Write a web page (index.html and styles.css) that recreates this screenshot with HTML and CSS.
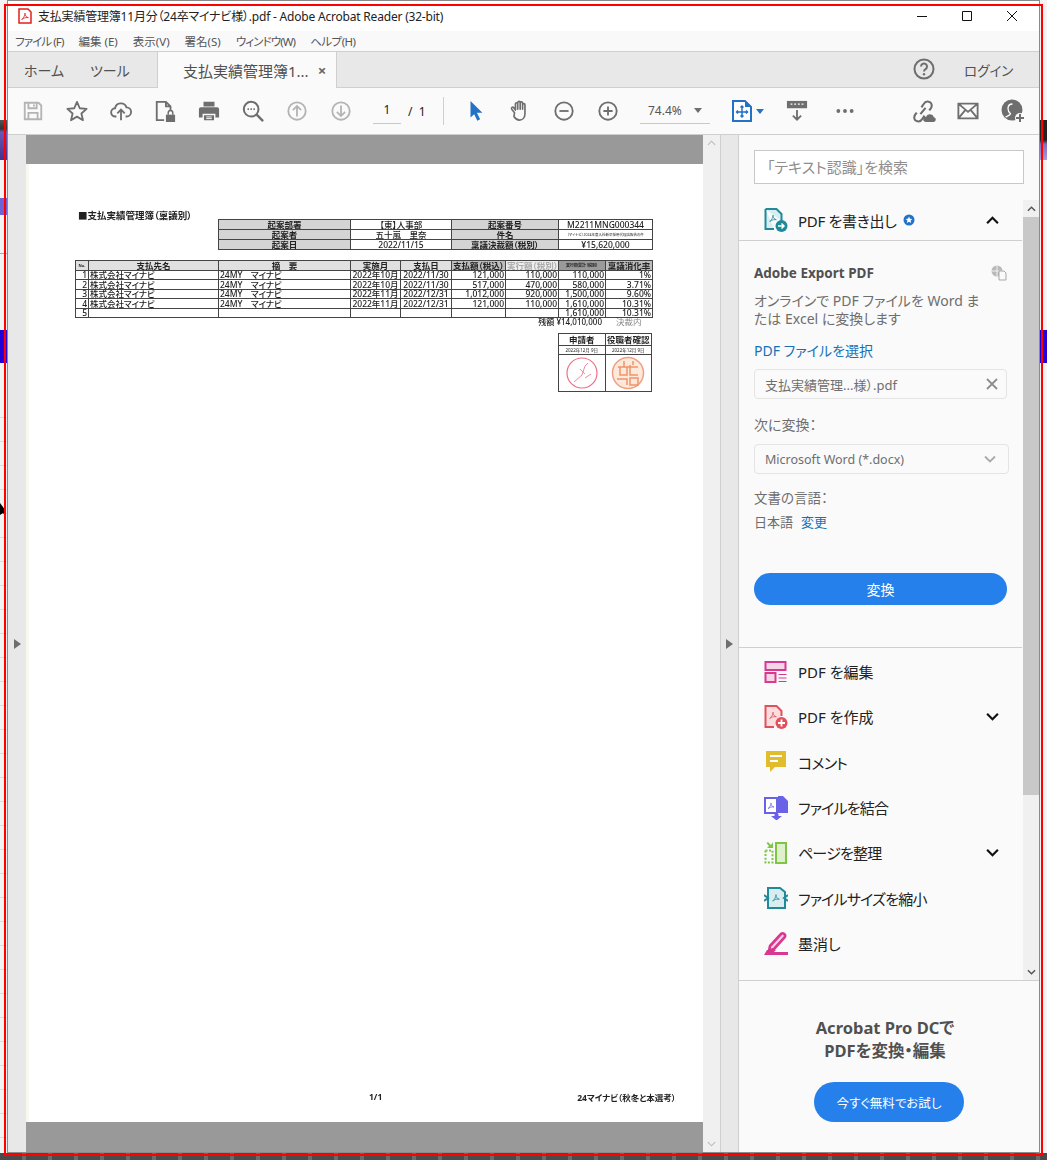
FILE: index.html
```html
<!DOCTYPE html>
<html lang="ja">
<head>
    <meta charset="UTF-8">
    <title>支払実績管理簿11月分（24卒マイナビ様）.pdf - Adobe Acrobat Reader (32-bit)</title>
    <link rel="stylesheet" href="styles.css">
</head>
<body>

<svg class="defs" width="0" height="0">
    <symbol id="acro" viewBox="0 0 24 24">
        <path d="M4 20c3-1 6-6 7-10 .5-2 .5-5 1-5s.5 3 1 5c1 3 3 5 7 6-4-.5-9 0-12 2-2 1.500-3 2.500-4 2z" fill="none" stroke="currentColor" stroke-width="2" stroke-linejoin="round"/>
    </symbol>
</svg>

<!-- desktop showing around the window -->
<div class="desk desk-l1"></div>
<div class="desk desk-l2"></div>
<div class="desk desk-l3"></div>
<div class="desk desk-l4"></div>
<div class="desk desk-lines"></div>
<div class="desk desk-r1"></div>
<div class="desk desk-r2"></div>
<div class="desk desk-floor"></div>
<svg class="desk desk-cursor" viewBox="0 0 6 14"><path d="M0 0l6 8-2 1 2 5-3-4-3 2z" fill="#000"/></svg>

<div class="window">

    <div class="titlebar">
        <svg class="app-icon" viewBox="0 0 14 16">
            <path d="M1 1h9l3 3v11H1z" fill="#fff" stroke="#e0201c" stroke-width="1.500"/>
            <use href="#acro" x="2" y="3" width="10" height="10" color="#e0201c"/>
        </svg>
        <span class="title-text">支払実績管理簿11月分（24卒マイナビ様）.pdf - Adobe Acrobat Reader (32-bit)</span>
        <div class="win-btns">
            <svg viewBox="0 0 45 20"><path d="M17 10.500h10" stroke="#111" fill="none"/></svg>
            <svg viewBox="0 0 45 20"><path d="M17.500 5.500h9v9h-9z" stroke="#111" fill="none"/></svg>
            <svg viewBox="0 0 45 20"><path d="M17 5l10 10M27 5L17 15" stroke="#111" fill="none"/></svg>
        </div>
    </div>

    <div class="menubar">
        <span class="kana">ファイル (F)</span>
        <span>編集 (E)</span>
        <span>表示(V)</span>
        <span>署名(S)</span>
        <span class="kana">ウィンドウ(W)</span>
        <span class="kana-s">ヘルプ(H)</span>
    </div>

    <div class="tabbar">
        <span class="tab">ホーム</span>
        <span class="tab">ツール</span>
        <div class="tab-active">
            <span>支払実績管理簿1...</span>
            <span class="tab-close">×</span>
        </div>
        <svg class="help" viewBox="0 0 22 22">
            <circle cx="11" cy="11" r="9.500" fill="none" stroke="#6e6e6e" stroke-width="2"/>
            <path d="M8 8.500a3 3 0 1 1 4.500 2.600c-1 .6-1.500 1-1.500 2.400" fill="none" stroke="#6e6e6e" stroke-width="2"/>
            <circle cx="11" cy="16.300" r="1.200" fill="#6e6e6e"/>
        </svg>
        <span class="login">ログイン</span>
    </div>

    <div class="toolbar">
        <div class="tool"><svg viewBox="0 0 24 24"><path d="M3 3h15l3 3v15H3zM7 3v6h9V3M13 5v2M7 21v-7h10v7" fill="none" stroke="#b4b4b4" stroke-width="2"/></svg></div>
        <div class="tool"><svg viewBox="0 0 24 24"><path d="M12 2l3 7 7.500.7-5.700 5 1.700 7.300-6.500-3.900L5.500 22l1.700-7.300-5.700-5L9 9z" fill="none" stroke="#6e6e6e" stroke-width="2" stroke-linejoin="round"/></svg></div>
        <div class="tool"><svg viewBox="0 0 24 24"><path d="M7 18H6a4.500 4.500 0 0 1-.5-9A6.500 6.500 0 0 1 18 8a5 5 0 0 1 0 10h-1M12 22V11M8 14.500L12 10.500l4 4" fill="none" stroke="#6e6e6e" stroke-width="2"/></svg></div>
        <div class="tool"><svg viewBox="0 0 24 24"><path d="M11 22H3V2h10l5 5v4M13 2v5h5" fill="none" stroke="#6e6e6e" stroke-width="2"/><path d="M13 16h10v8H13z" fill="#6e6e6e"/><path d="M15.500 16v-2a2.500 2.500 0 0 1 5 0v2" fill="none" stroke="#6e6e6e" stroke-width="1.600"/></svg></div>
        <div class="tool"><svg viewBox="0 0 24 24"><path d="M6 2h12v5H6zM3 8h18a2 2 0 0 1 2 2v9h-4v-4H5v4H1v-9a2 2 0 0 1 2-2zM6.500 16.500h11V22h-11z" fill="#6e6e6e"/><path d="M9 18.500h6M9 20.300h6" stroke="#fff"/></svg></div>
        <div class="tool"><svg viewBox="0 0 24 24"><circle cx="10" cy="10" r="8" fill="none" stroke="#6e6e6e" stroke-width="2.200"/><path d="M16 16l7 7" stroke="#6e6e6e" stroke-width="2.600"/><path d="M6 10h1.600M9.200 10h1.600M12.400 10H14" stroke="#6e6e6e" stroke-width="1.800"/></svg></div>
        <div class="tool"><svg viewBox="0 0 24 24"><circle cx="12" cy="12" r="9.500" fill="none" stroke="#b4b4b4" stroke-width="2"/><path d="M12 18V7M7.500 11L12 6.500l4.500 4.500" fill="none" stroke="#b4b4b4" stroke-width="2"/></svg></div>
        <div class="tool"><svg viewBox="0 0 24 24"><circle cx="12" cy="12" r="9.500" fill="none" stroke="#b4b4b4" stroke-width="2"/><path d="M12 6v11M7.500 13l4.500 4.500 4.500-4.500" fill="none" stroke="#b4b4b4" stroke-width="2"/></svg></div>
        <div class="pager">
            <span class="page-no">1</span>
            <span class="page-total">/&nbsp;&nbsp;1</span>
        </div>
        <div class="tool-sep"></div>
        <div class="tool"><svg viewBox="0 0 24 24"><path d="M6 1l13 13h-6l3.500 7-3 1.500L10 15.500 6 19z" fill="#2272c8"/></svg></div>
        <div class="tool"><svg viewBox="0 0 24 24"><path d="M6 14L3 10c-1-1.500 1-3 2.200-1.500L7 11V4.500c0-2 2.500-2 2.500 0V10V3c0-2 2.700-2 2.700 0v7V3.500c0-2 2.600-2 2.600 0V10V5.500c0-2 2.600-2 2.600 0V15c0 4-2.500 7-6 7-3 0-4.500-1.500-6-4z" fill="none" stroke="#6e6e6e" stroke-width="1.800" stroke-linejoin="round"/></svg></div>
        <div class="tool"><svg viewBox="0 0 24 24"><circle cx="12" cy="12" r="9.500" fill="none" stroke="#6e6e6e" stroke-width="2"/><path d="M7 12h10" stroke="#6e6e6e" stroke-width="2"/></svg></div>
        <div class="tool"><svg viewBox="0 0 24 24"><circle cx="12" cy="12" r="9.500" fill="none" stroke="#6e6e6e" stroke-width="2"/><path d="M7 12h10M12 7v10" stroke="#6e6e6e" stroke-width="2"/></svg></div>
        <div class="zoom-field">
            <span>74.4%</span>
            <i class="tri"></i>
        </div>
        <div class="fit">
            <svg viewBox="0 0 20 22"><path d="M1 1h12l6 6v14H1z" fill="#fff" stroke="#2272c8" stroke-width="2"/><path d="M13 1v6h6" fill="#2272c8"/><path d="M10 6v11M4.500 12h11M8.500 7.500L10 6l1.500 1.500M8.500 15.500L10 17l1.500-1.500M6 10.500L4.500 12 6 13.500M14 10.500l1.500 1.500-1.500 1.500" fill="none" stroke="#2272c8" stroke-width="1.500"/></svg>
            <i class="tri tri-blue"></i>
        </div>
        <div class="tool tool-key"><svg viewBox="0 0 24 24"><path d="M1 1h22v8H1z" fill="#6e6e6e"/><path d="M5 4.500h2M9 4.500h2M13 4.500h2M17 4.500h2" stroke="#fff" stroke-width="1.500"/><path d="M12 11v10M7.500 17l4.500 4.500 4.500-4.500" fill="none" stroke="#6e6e6e" stroke-width="2"/></svg></div>
        <div class="tool tool-more"><svg viewBox="0 0 24 24"><circle cx="4" cy="12" r="2.300" fill="#6e6e6e"/><circle cx="12" cy="12" r="2.300" fill="#6e6e6e"/><circle cx="20" cy="12" r="2.300" fill="#6e6e6e"/></svg></div>
        <div class="tool tool-link"><svg viewBox="0 0 24 24"><path d="M10 8l2-3c1.500-2.500 4-3 6-2s2.500 3.500 1 6l-1.500 2M9 14.500l5-6M13 16l-2 3c-1.500 2.500-4 3-6 2s-2.500-3.500-1-6l1.500-2" fill="none" stroke="#6e6e6e" stroke-width="2"/><path d="M14 22a2.500 2.500 0 0 1 .5-5 4 4 0 0 1 7.500.5 2.300 2.300 0 0 1 0 4.500z" fill="#6e6e6e"/></svg></div>
        <div class="tool tool-mail"><svg viewBox="0 0 24 24"><path d="M1.500 4h21v16h-21zM1.500 4L12 13 22.500 4M1.500 20L9 11M22.500 20L15 11" fill="none" stroke="#6e6e6e" stroke-width="2"/></svg></div>
        <div class="tool tool-user"><svg viewBox="0 0 24 24"><circle cx="11" cy="11" r="10.500" fill="#6e6e6e"/><path d="M4.500 18c2-1 4.500-1.500 5-3.200C8 13.500 7 11.500 7 9.500 7 6.500 9 5 11.500 5" fill="none" stroke="#fff" stroke-width="1.300"/><circle cx="19" cy="19" r="5" fill="#fafafa"/><path d="M19 15v8M15 19h8" stroke="#6e6e6e" stroke-width="2"/></svg></div>
    </div>

    <div class="main">
        <div class="nav-strip"><i class="arrow"></i></div>

        <div class="doc">
            <div class="band band-top"></div>
            <div class="page">
                <div class="scan">
                    <div class="scan-title">■支払実績管理簿（稟議別）</div>
                    <table class="head-table">
                        <colgroup><col class="c-h1"><col class="c-h2"><col class="c-h3"><col class="c-h4"></colgroup>
                        <tr><th>起案部署</th><td>【東】人事部</td><th>起案番号</th><td>M2211MNG000344</td></tr>
                        <tr><th>起案者</th><td>五十嵐　里奈</td><th>件名</th><td class="tiny">（マイナビ）2024年度入社新卒採用代理店報告の件</td></tr>
                        <tr><th>起案日</th><td>2022/11/15</td><th>稟議決裁額（税別）</th><td>¥15,620,000</td></tr>
                    </table>
                    <table class="pay-table">
                        <colgroup><col class="c-no"><col class="c-name"><col class="c-sum"><col class="c-month"><col class="c-date"><col class="c-pay"><col class="c-exec"><col class="c-total"><col class="c-rate"></colgroup>
                        <tr>
                            <th class="small">No.</th><th>支払先名</th><th>摘　要</th><th>実施月</th><th>支払日</th>
                            <th class="dark">支払額（税込）</th><th class="faint">実行額（税別）</th><th class="dark2 small">実行額累計（税別）</th><th class="dark">稟議消化率</th>
                        </tr>
                        <tr><td class="n">1</td><td>株式会社マイナビ</td><td>24MY　マイナビ</td><td class="c">2022年10月</td><td class="c">2022/11/30</td><td class="r">121,000</td><td class="r">110,000</td><td class="r">110,000</td><td class="r">1%</td></tr>
                        <tr><td class="n">2</td><td>株式会社マイナビ</td><td>24MY　マイナビ</td><td class="c">2022年10月</td><td class="c">2022/11/30</td><td class="r">517,000</td><td class="r">470,000</td><td class="r">580,000</td><td class="r">3.71%</td></tr>
                        <tr><td class="n">3</td><td>株式会社マイナビ</td><td>24MY　マイナビ</td><td class="c">2022年11月</td><td class="c">2022/12/31</td><td class="r">1,012,000</td><td class="r">920,000</td><td class="r">1,500,000</td><td class="r">9.60%</td></tr>
                        <tr><td class="n">4</td><td>株式会社マイナビ</td><td>24MY　マイナビ</td><td class="c">2022年11月</td><td class="c">2022/12/31</td><td class="r">121,000</td><td class="r">110,000</td><td class="r">1,610,000</td><td class="r">10.31%</td></tr>
                        <tr><td class="n">5</td><td></td><td></td><td></td><td></td><td></td><td></td><td class="r">1,610,000</td><td class="r">10.31%</td></tr>
                    </table>
                    <div class="remain"><span>残額 ¥14,010,000</span><span class="remain-note">決裁内</span></div>
                    <table class="stamp-table">
                        <tr><th>申請者</th><th>役職者確認</th></tr>
                        <tr class="stamp-dates"><td>2022年12月 9日</td><td>2022年12月 9日</td></tr>
                        <tr class="stamp-row">
                            <td><svg viewBox="0 0 34 34"><circle cx="17" cy="17" r="15" fill="none" stroke="#ef6f88" stroke-width="1.200"/><path d="M9 26l8-7 3-9 3-3M15 13l5 5M20 22l6-4" fill="none" stroke="#f08aa0"/></svg></td>
                            <td><svg viewBox="0 0 34 34"><circle cx="17" cy="17" r="15.500" fill="#fde9dc" stroke="#f0a080" stroke-width="1.500"/><path d="M7 11h20M9 11v8h7v-8M19 9v10h8M6 23h10v6M19 22h8v7h-8zM13 5v6M22 5v4" fill="none" stroke="#f0926a" stroke-width="1.500"/></svg></td>
                        </tr>
                    </table>
                </div>
                <div class="scan-foot"><span>1/1</span><span>24マイナビ（秋冬と本選考）</span></div>
            </div>
            <div class="band band-bottom"></div>
        </div>

        <div class="doc-scroll">
            <svg viewBox="0 0 10 6"><path d="M1 5l4-4 4 4" fill="none" stroke="#bbb" stroke-width="1.200"/></svg>
            <svg viewBox="0 0 10 6"><path d="M1 1l4 4 4-4" fill="none" stroke="#bbb" stroke-width="1.200"/></svg>
        </div>
        <div class="handle"><i class="arrow"></i></div>

        <div class="panel">
            <div class="search-wrap"><div class="search">「テキスト認識」を検索</div></div>

            <div class="tools-area">
                <div class="tools-list">
                    <div class="tool-row tool-row-open">
                        <svg class="row-icon" viewBox="0 0 24 24"><path d="M1.500 1h11l5 5v7M1.500 1v20H10" fill="#d9edf0" stroke="#1f8a98" stroke-width="2"/><use href="#acro" x="4" y="5" width="10" height="10" color="#1f8a98"/><circle cx="17.500" cy="18" r="6" fill="#1f8a98"/><path d="M14 18h6M17.500 15.500L20 18l-2.500 2.500" fill="none" stroke="#fff" stroke-width="1.500"/></svg>
                        <span>PDF を書き出し</span>
                        <svg class="badge" viewBox="0 0 12 12"><circle cx="6" cy="6" r="5.500" fill="#2272c8"/><path d="M6 2.500l1 2.300 2.400.2-1.800 1.600.6 2.400L6 7.700 3.800 9l.6-2.400L2.600 5l2.400-.2z" fill="#fff"/></svg>
                        <svg class="chev" viewBox="0 0 12 8"><path d="M1 6.500l5-5 5 5" fill="none" stroke="#111" stroke-width="2"/></svg>
                    </div>

                    <div class="export">
                        <div class="export-head">
                            <b>Adobe Export PDF</b>
                            <svg viewBox="0 0 16 16"><circle cx="6" cy="6" r="5.500" fill="#b9b9b9"/><path d="M.5 6h11M6 .5v11" stroke="#fff" stroke-width=".8"/><path d="M8 6h5l2 2v7H8z" fill="#fafafa" stroke="#a8a8a8"/></svg>
                        </div>
                        <p class="export-desc">オンラインで PDF ファイルを Word ま<br>たは Excel に変換します</p>
                        <a class="link pick">PDF ファイルを選択</a>
                        <div class="field file-field">
                            <span>支払実績管理...様）.pdf</span>
                            <svg viewBox="0 0 12 12"><path d="M1 1l10 10M11 1L1 11" stroke="#8e8e8e" stroke-width="1.800"/></svg>
                        </div>
                        <div class="lbl lbl-to">次に変換：</div>
                        <div class="field select-field">
                            <span>Microsoft Word (*.docx)</span>
                            <svg viewBox="0 0 12 8"><path d="M1 1.500l5 5 5-5" fill="none" stroke="#aaa" stroke-width="1.800"/></svg>
                        </div>
                        <div class="lbl lbl-lang">文書の言語：</div>
                        <div class="lang"><span>日本語</span><a class="link">変更</a></div>
                        <button class="btn btn-convert">変換</button>
                    </div>

                    <div class="tool-row">
                        <svg class="row-icon" viewBox="0 0 24 24"><path d="M1.500 2h20v8h-20zM1.500 13h10v9h-10z" fill="#f6d5e6" stroke="#d8388f" stroke-width="2"/><path d="M14.500 14.500h8M14.500 18h8M14.500 21.500h8" stroke="#d8388f" stroke-width="1.200"/></svg>
                        <span>PDF を編集</span>
                    </div>
                    <div class="tool-row">
                        <svg class="row-icon" viewBox="0 0 24 24"><path d="M10 22H1.500V1h11l5 5v5" fill="#fbdde0" stroke="#e2505c" stroke-width="2"/><use href="#acro" x="4" y="5" width="10" height="10" color="#e2505c"/><circle cx="17.500" cy="18" r="6" fill="#e2505c"/><path d="M14 18h7M17.500 14.500v7" stroke="#fff" stroke-width="1.800"/></svg>
                        <span>PDF を作成</span>
                        <svg class="chev" viewBox="0 0 12 8"><path d="M1 1.500l5 5 5-5" fill="none" stroke="#111" stroke-width="2"/></svg>
                    </div>
                    <div class="tool-row tool-row-kana">
                        <svg class="row-icon" viewBox="0 0 24 24"><path d="M2 1h20v16H11l-5 5v-5H2z" fill="#e1bd2d"/><path d="M6 6h12M6 11h8" stroke="#fff" stroke-width="2"/></svg>
                        <span>コメント</span>
                    </div>
                    <div class="tool-row tool-row-kana">
                        <svg class="row-icon" viewBox="0 0 24 24"><path d="M1 2h12v15H1z" fill="#fff" stroke="#6a62e6" stroke-width="2"/><use href="#acro" x="2.500" y="5" width="9" height="9" color="#6a62e6"/><path d="M14 0h5l5 5v12H14z" fill="#6a62e6"/><path d="M10.500 18v2H7l5.500 4.500L18 20h-3.500v-2z" fill="#6a62e6"/></svg>
                        <span>ファイルを結合</span>
                    </div>
                    <div class="tool-row tool-row-kana">
                        <svg class="row-icon" viewBox="0 0 24 24"><path d="M12 2h10v20H12z" fill="#dff0cf" stroke="#7fc544" stroke-width="2"/><path d="M1.500 9.500h7v12h-7z" fill="none" stroke="#7fc544" stroke-width="2" stroke-dasharray="2 1.600"/><path d="M9 1v6H3l2-2-2.500-3 1.500-1 3 3z" fill="#7fc544"/></svg>
                        <span>ページを整理</span>
                        <svg class="chev" viewBox="0 0 12 8"><path d="M1 1.500l5 5 5-5" fill="none" stroke="#111" stroke-width="2"/></svg>
                    </div>
                    <div class="tool-row tool-row-kana">
                        <svg class="row-icon" viewBox="0 0 24 24"><path d="M4 2h12l5 4v16H4z" fill="#d9edf0" stroke="#1f8a98" stroke-width="2"/><use href="#acro" x="7" y="6" width="10" height="11" color="#1f8a98"/><path d="M0 9l4 3-4 3M24 9l-4 3 4 3" fill="none" stroke="#1f8a98" stroke-width="2"/></svg>
                        <span>ファイルサイズを縮小</span>
                    </div>
                    <div class="tool-row">
                        <svg class="row-icon" viewBox="0 0 24 24"><path d="M6 15L17 3c2-2 5.500 1 3.500 3.500L10 18l-5 1.500z" fill="#f8d0e4" stroke="#d8388f" stroke-width="2.600"/><path d="M0 24l3-5h9l-2 2h14v3z" fill="#d8388f"/></svg>
                        <span>墨消し</span>
                    </div>
                </div>
                <div class="panel-scroll">
                    <div class="ps-btn"><svg viewBox="0 0 10 6"><path d="M1 5l4-4 4 4" fill="none" stroke="#555" stroke-width="1.600"/></svg></div>
                    <div class="ps-thumb"></div>
                    <div class="ps-btn ps-down"><svg viewBox="0 0 10 6"><path d="M1 1l4 4 4-4" fill="none" stroke="#555" stroke-width="1.600"/></svg></div>
                </div>
            </div>

            <div class="promo">
                <div class="promo-text">Acrobat Pro DCで<br>PDFを変換・編集</div>
                <button class="btn btn-try">今すぐ無料でお試し</button>
            </div>
        </div>
    </div>
</div>

<div class="capture-frame"></div>

</body>
</html>
```

FILE: styles.css
```css
* { box-sizing: border-box; }
html, body { margin: 0; height: 100%; }
body {
    position: relative; width: 1047px; height: 1160px; overflow: hidden;
    background: #f3f3f3; color: #333;
    font-family: "Noto Sans", "Noto Sans CJK JP", sans-serif;
    font-feature-settings: "palt";
}
.defs { position: absolute; }
i { display: block; font-style: normal; }

/* desktop around the window */
.desk { position: absolute; }
.desk-l1 { left: 0; top: 120px; width: 7px; height: 40px; background: linear-gradient(#555 0, #333 22%, #6a58b8 30%, #44308a 100%); }
.desk-l2 { left: 0; top: 198px; width: 7px; height: 17px; background: #6d62d6; }
.desk-l3 { left: 0; top: 330px; width: 7px; height: 33px; background: #2400d8; }
.desk-l4 { left: 0; top: 253px; width: 7px; height: 1px; background: #aaa; }
.desk-lines { left: 0; top: 417px; width: 7px; height: 730px; background: repeating-linear-gradient(#dcd8f0 0, #dcd8f0 1px, transparent 1px, transparent 24px); }
.desk-r1 { right: 0; top: 120px; width: 7px; height: 40px; background: linear-gradient(#222 0, #222 50%, #7a6cc0 60%, #a89ad8 100%); }
.desk-r2 { right: 0; top: 330px; width: 7px; height: 33px; background: #2400d8; }
.desk-floor { left: 0; right: 0; top: 1153px; height: 7px; background: repeating-linear-gradient(90deg, #4a4a4a 0, #4a4a4a 22px, #6a6a6a 22px, #6a6a6a 26px); }
.desk-cursor { left: 0; top: 503px; width: 6px; height: 14px; }

.capture-frame {
    position: absolute; left: 4px; top: 4px; width: 1039px; height: 1152px;
    border: 2px solid #f00; pointer-events: none;
}

.window {
    position: relative; display: flex; flex-direction: column;
    width: 1033px; height: 1153px; margin-left: 7px;
    background: #fff; border: 1px solid #8a8a8a;
}

/* title + menu */
.titlebar { display: flex; align-items: center; flex: none; height: 30px; padding-left: 10px; background: #fff; }
.app-icon { width: 14px; height: 16px; margin-right: 6px; }
.title-text { font-size: 12px; letter-spacing: -.2px; color: #222; }
.win-btns { display: flex; margin-left: auto; margin-right: 4px; margin-top: -1px; }
.win-btns svg { width: 45px; height: 20px; }

.menubar { display: flex; align-items: center; flex: none; gap: 15px; height: 21px; padding-left: 7px; background: #f9f9f9; border-bottom: 1px solid #cfcfcf; font-size: 11.5px; color: #555; }
.kana { letter-spacing: -.9px; }
.kana-s { letter-spacing: -.5px; }

.tabbar { display: flex; align-items: stretch; flex: none; height: 36px; background: #e8e8e8; border-bottom: 1px solid #cfcfcf; font-size: 14px; color: #505050; }
.tab { display: flex; align-items: center; padding-left: 16px; width: 66px; }
.tab + .tab { padding-left: 16px; width: 83px; }
.tab-active { display: flex; align-items: center; width: 180px; padding-left: 25px; background: #fafafa; margin-bottom: -1px; border-left: 1px solid #cfcfcf; border-right: 1px solid #cfcfcf; font-size: 15px; }
.tab-close { margin-left: 9px; font-size: 15px; font-weight: 700; color: #666; }
.help { width: 22px; height: 22px; margin: 6px 0 0 auto; }
.login { display: flex; align-items: center; width: 75px; margin-left: 29px; font-size: 13.500px; }

/* toolbar */
.toolbar { display: flex; align-items: center; flex: none; height: 47px; padding-left: 3px; background: #fafafa; border-bottom: 1px solid #cfcfcf; }
.tool { display: flex; align-items: center; justify-content: center; flex: none; width: 44px; height: 44px; }
.tool svg { width: 22px; height: 22px; }
.pager { display: flex; align-items: center; width: 70px; margin-left: 10px; font-size: 12px; color: #222; }
.page-no { width: 28px; height: 26px; line-height: 24px; text-align: center; border-bottom: 1px solid #c8c8c8; }
.page-total { margin-left: 7px; }
.tool-sep { width: 1px; height: 28px; margin: 0 10px 0 0; background: #cfcfcf; }
.zoom-field { display: flex; align-items: center; justify-content: space-between; width: 70px; height: 26px; margin-left: 10px; padding: 0 8px; border-bottom: 1px solid #c8c8c8; font-size: 12px; color: #555; }
.tri { width: 0; height: 0; border: 4px solid transparent; border-top: 5px solid #6e6e6e; border-bottom: 0; }
.tri-blue { border-top-color: #2272c8; }
.fit { display: flex; align-items: center; gap: 4px; margin-left: 22px; }
.fit svg { width: 20px; height: 22px; }
.tool-key { margin-left: 11px; }
.tool-more { margin-left: 4px; }
.tool-more svg { width: 20px; }
.tool-link { margin-left: 34px; }
.tool-link svg { width: 25px; height: 25px; }
.tool-mail { margin-left: 1px; }
.tool-user { margin-left: 1px; }
.tool-user svg { width: 24px; height: 24px; }

/* main area */
.main { display: flex; flex: 1; min-height: 0; background: #fafafa; }
.nav-strip, .handle { display: flex; align-items: center; justify-content: center; flex: none; background: #e8e8e8; }
.nav-strip { width: 18px; }
.handle { width: 19px; border-left: 1px solid #cfcfcf; border-right: 1px solid #cfcfcf; }
.arrow { width: 0; height: 0; border: 5px solid transparent; border-left: 7px solid #6e6e6e; border-right: 0; }

.doc { display: flex; flex-direction: column; width: 677px; flex: none; background: #999; }
.band-top { height: 29px; }
.band-bottom { height: 30px; }
.page { display: flex; flex: 1; flex-direction: column; justify-content: space-between; background: #fff; border-left: 3px solid #f8f8f0; }
.doc-scroll { display: flex; flex-direction: column; justify-content: space-between; flex: none; width: 17px; padding: 5px 4px; background: #f0f0f0; }
.doc-scroll svg { width: 9px; height: 6px; }

/* scanned document */
.scan { padding: 47px 0 0 46px; font-size: 8.5px; font-weight: 500; color: #222; filter: blur(.4px); }
.scan-title { height: 8px; margin-left: 3px; line-height: 10px; font-size: 9.500px; font-weight: 700; }
.scan table { border-collapse: collapse; table-layout: fixed; }
.scan th, .scan td { padding: 0 1px; border: 1px solid #444; font-size: 8.5px; line-height: 8px; overflow: hidden; white-space: nowrap; }
.scan th { font-weight: 700; background: #d4d4d4; text-align: center; }
.head-table { width: 434px; margin-left: 143px; }
.head-table th, .head-table td { height: 10px; }
.head-table td { text-align: center; }
.head-table td.tiny { font-size: 3.5px; font-weight: 400; }
.c-h1 { width: 132px; }
.c-h2 { width: 101px; }
.c-h3 { width: 107px; }
.c-h4 { width: 94px; }

.pay-table { width: 577px; margin-top: 10px; }
.pay-table tr:nth-child(odd) th, .pay-table tr:nth-child(odd) td { height: 10px; }
.pay-table tr:nth-child(even) th, .pay-table tr:nth-child(even) td { height: 9px; }
.c-no { width: 13px; }
.c-name { width: 130px; }
.c-sum { width: 132px; }
.c-month { width: 50px; }
.c-date { width: 51px; }
.c-pay { width: 54px; }
.c-exec { width: 53px; }
.c-total { width: 47px; }
.c-rate { width: 47px; }
.scan .pay-table th { background: #e0e0e0; }
.scan .pay-table th.dark { background: #bdbdbd; }
.scan .pay-table th.dark2 { background: #9a9a9a; }
.scan .pay-table th.faint { background: #eee; color: #aaa; }
.scan .pay-table th.small { font-size: 4px; }
.n { text-align: right; }
.c { text-align: center; }
.r { text-align: right; }

.remain { display: flex; justify-content: flex-end; width: 578px; height: 10px; margin-top: -1px; font-size: 8px; line-height: 10px; }
.remain-note { width: 37px; margin-left: 14px; font-size: 8.500px; color: #888; font-weight: 400; white-space: nowrap; }
.stamp-table { width: 94px; margin: 6px 0 0 483px; }
.scan .stamp-table th { height: 12px; background: #fff; }
.scan .stamp-dates td { height: 8px; font-size: 4.5px; font-weight: 400; text-align: center; padding: 0; }
.scan .stamp-row td { height: 37px; padding: 0; text-align: center; }
.stamp-row svg { display: block; width: 34px; height: 34px; margin: 0 auto; }

.scan-foot { display: flex; justify-content: space-between; padding: 0 27px 19px 340px; font-size: 8.500px; font-weight: 700; color: #222; filter: blur(.25px); }

/* right panel */
.panel { display: flex; flex: 1; flex-direction: column; min-width: 0; background: #fafafa; }
.search-wrap { flex: none; height: 65px; padding: 15px 15px 0; }
.search { height: 34px; padding-left: 12px; background: #fff; border: 1px solid #c8c8c8; line-height: 32px; font-size: 15px; color: #8e8e8e; }

.tools-area { display: flex; flex: none; height: 781px; border-bottom: 1px solid #cfcfcf; }
.tools-list { flex: 1; min-width: 0; }
.tool-row { display: flex; align-items: center; height: 45.300px; padding-left: 25px; font-size: 15px; color: #222; }
.tool-row-open { height: 41px; border-bottom: 1px solid #cfcfcf; letter-spacing: -.3px; }
.tool-row-kana span { letter-spacing: -.8px; }
.row-icon { flex: none; width: 24px; height: 24px; margin-right: 10px; }
.badge { width: 12px; height: 12px; margin-left: 6px; }
.chev { width: 13px; height: 9px; margin-left: auto; margin-right: 23px; }

.export { height: 407px; margin-bottom: 1px; padding: 23px 15px 0; border-bottom: 1px solid #cfcfcf; font-size: 14px; letter-spacing: 0; color: #6e6e6e; }
.export-head { display: flex; align-items: center; justify-content: space-between; height: 18px; }
.export-head b { font-size: 13.500px; font-weight: 700; color: #505050; }
.export-head svg { width: 16px; height: 16px; }
.export-desc { margin: 10px 0 0; line-height: 18px; }
.link { color: #1473b8; }
.pick { display: block; margin-top: 14px; height: 18px; line-height: 18px; }
.field { display: flex; align-items: center; justify-content: space-between; height: 30px; padding: 0 8px 0 10px; background: #fafafa; border: 1px solid #e4e4e4; border-radius: 4px; font-size: 13px; }
.file-field { width: 253px; margin-top: 9px; }
.file-field svg { width: 12px; height: 12px; }
.select-field { width: 255px; margin-top: 10px; font-size: 12.500px; }
.select-field svg { width: 12px; height: 8px; margin-right: 4px; }
.lbl { height: 18px; line-height: 18px; }
.lbl-to { margin-top: 17px; }
.lbl-lang { margin-top: 15px; font-size: 13.500px; }
.lang { display: flex; gap: 8px; height: 18px; margin-top: 6px; font-size: 13px; line-height: 18px; }
.btn { display: block; border: 0; background: #2680eb; color: #fff; font-family: inherit; font-feature-settings: inherit; }
.btn-convert { width: 253px; height: 32px; margin-top: 42px; border-radius: 16px; font-size: 14px; }

.panel-scroll { display: flex; flex-direction: column; flex: none; width: 17px; background: #f0f0f0; border-left: 1px solid #fafafa; }
.ps-btn { display: flex; align-items: center; justify-content: center; height: 17px; }
.ps-btn svg { width: 9px; height: 6px; }
.ps-thumb { height: 578px; background: #c8c8c8; }
.ps-down { margin-top: auto; }

.promo { display: flex; flex: 1; flex-direction: column; align-items: center; padding-top: 35px; }
.promo-text { padding-right: 8px; text-align: center; font-size: 16.500px; line-height: 23px; font-weight: 700; color: #505050; }
.btn-try { width: 150px; height: 40px; margin-top: 20px; border-radius: 20px; font-size: 12.500px; }
```
